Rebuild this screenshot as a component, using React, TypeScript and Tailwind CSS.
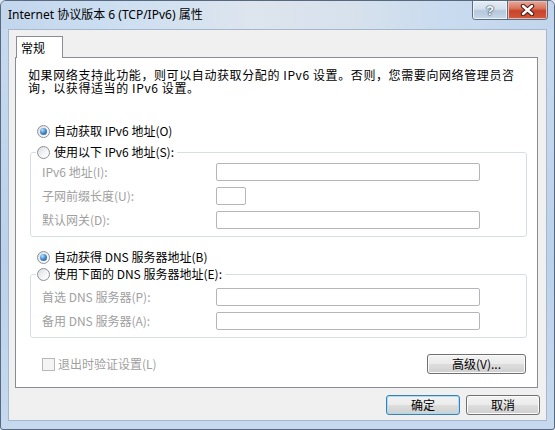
import React from 'react';

interface RadioProps {
  checked?: boolean;
  label: string;
}

// Win7-style radio bullet
const Radio: React.FC<{ checked?: boolean }> = ({ checked }) => (
  <span className="w-[13px] h-[13px] shrink-0 rounded-full border border-[#8b9097] bg-[linear-gradient(135deg,#d9dde2_0%,#f5f6f7_60%,#ffffff_100%)] flex items-center justify-center">
    {checked && (
      <span className="w-[7px] h-[7px] rounded-full bg-[radial-gradient(circle_at_35%_30%,#b9e0fb_0%,#4b8fd0_45%,#1d4f86_100%)]" />
    )}
  </span>
);

const RadioRow: React.FC<RadioProps> = ({ checked, label }) => (
  <span className="h-[16px] flex items-center gap-[4px] whitespace-nowrap text-black">
    <Radio checked={checked} />
    <span>{label}</span>
  </span>
);

interface FieldProps {
  label: string;
  small?: boolean;
}

const Field: React.FC<FieldProps> = ({ label, small }) => (
  <div className="h-[18px] flex items-center pl-[11px]">
    <span className="w-[174px] text-[#a0a0a0] whitespace-nowrap">{label}</span>
    <span
      className={
        small
          ? 'w-[30px] h-[18px] rounded-[2px] border border-[#b3b7bc] bg-white'
          : 'w-[264px] h-[18px] rounded-[2px] border border-[#b3b7bc] bg-white'
      }
    />
  </div>
);

interface ButtonProps {
  label: string;
  width: string;
  isDefault?: boolean;
}

const Button: React.FC<ButtonProps> = ({ label, width, isDefault }) => (
  <div
    className={
      (isDefault
        ? 'border-[#3c7fb1] shadow-[inset_0_0_0_1px_#a9dcf6] '
        : 'border-[#707070] shadow-[inset_0_0_0_1px_#fbfbfb] ') +
      width +
      ' h-[20px] rounded-[3px] border bg-[linear-gradient(180deg,#f3f3f3_0%,#ebebeb_48%,#dddddd_52%,#cfcfcf_100%)] flex items-center justify-center text-black whitespace-nowrap'
    }
  >
    {label}
  </div>
);

export default function App() {
  return (
    <div className="w-[555px] h-[430px] bg-[#dfe8f2]">
      <div className="w-[555px] h-[430px] flex flex-col rounded-t-[6px] rounded-b-[3px] border border-[#56697f] bg-[linear-gradient(180deg,#c8daee_0%,#bcd2ea_60%,#c6d9ee_100%)] overflow-hidden">
        {/* Title bar */}
        <div className="h-[28px] shrink-0 flex items-start justify-between bg-[linear-gradient(90deg,#c2d6ec_0%,#cddff1_22%,#dde5ee_45%,#d8e2ec_62%,#c9dbef_80%,#c1d6ec_100%)]">
          <div className="h-[28px] pl-[7px] flex items-center text-[12px] text-black whitespace-nowrap font-['Noto_Sans','Noto_Sans_CJK_SC',sans-serif]">
            Internet 协议版本 6 (TCP/IPv6) 属性
          </div>
          <div className="mr-[6px] h-[19px] flex rounded-b-[4px] border border-t-0 border-[#5a6d84] overflow-hidden">
            <div className="w-[34px] h-full flex items-center justify-center bg-[linear-gradient(180deg,#e6eef6_0%,#d3dfeb_45%,#b5c7da_55%,#c9d8e8_100%)] shadow-[inset_0_0_0_1px_#eef4fa]">
              <span className="text-[13px] leading-none font-bold text-white font-['Liberation_Sans',sans-serif] [text-shadow:0_0_1px_#3d4f63,0_0_1px_#3d4f63,0_0_2px_#3d4f63]">
                ?
              </span>
            </div>
            <div className="w-[40px] h-full flex items-center justify-center border-l border-[#5a6d84] bg-[linear-gradient(180deg,#e9a99a_0%,#d8775f_40%,#c7432a_55%,#d2593c_100%)] shadow-[inset_0_0_0_1px_#eebcae]">
              <svg width="15" height="12" viewBox="0 0 15 12">
                <path d="M3 2 L12 10 M12 2 L3 10" stroke="#4a1a12" strokeWidth="4.4" strokeLinecap="round" />
                <path d="M3 2 L12 10 M12 2 L3 10" stroke="#ffffff" strokeWidth="2.4" strokeLinecap="round" />
              </svg>
            </div>
          </div>
        </div>

        {/* Client area */}
        <div className="flex-1 mx-[7px] mb-[8px] border border-[#a4b7cc] bg-[#f0f0f0] flex flex-col pt-[6px] text-[12px] leading-[12px] font-['Noto_Sans_CJK_SC',sans-serif]">
          {/* Tab strip */}
          <div className="ml-[7px] relative z-10 -mb-px w-[47px] h-[22px] border border-b-0 border-[#898c95] bg-white flex items-center pl-[4px] text-black">
            常规
          </div>

          {/* Tab panel */}
          <div className="flex-1 ml-[6px] mr-[8px] border border-[#898c95] bg-white flex flex-col pl-[12px] pr-[10px] pt-[10px]">
            <p className="text-black leading-[13px] tracking-[0.6px]">
              如果网络支持此功能，则可以自动获取分配的 IPv6 设置。否则，您需要向网络管理员咨询，以获得适当的 IPv6 设置。
            </p>

            <div className="mt-[29px] pl-[9px]">
              <RadioRow checked label="自动获取 IPv6 地址(O)" />
            </div>

            <fieldset className="mt-[5px] ml-[2px] border border-[#d5dfe5] rounded-[3px] pb-[7px]">
              <legend className="ml-[5px] pl-[1px] pr-[3px]">
                <RadioRow label="使用以下 IPv6 地址(S):" />
              </legend>
              <div className="pt-[3px] flex flex-col gap-[6px]">
                <Field label="IPv6 地址(I):" />
                <Field label="子网前缀长度(U):" small />
                <Field label="默认网关(D):" />
              </div>
            </fieldset>

            <div className="mt-[12px] pl-[9px]">
              <RadioRow checked label="自动获得 DNS 服务器地址(B)" />
            </div>

            <fieldset className="mt-[1px] ml-[2px] border border-[#d5dfe5] rounded-[3px] pb-[7px]">
              <legend className="ml-[5px] pl-[1px] pr-[3px]">
                <RadioRow label="使用下面的 DNS 服务器地址(E):" />
              </legend>
              <div className="pt-[6px] flex flex-col gap-[6px]">
                <Field label="首选 DNS 服务器(P):" />
                <Field label="备用 DNS 服务器(A):" />
              </div>
            </fieldset>

            <div className="mt-[16px] h-[20px] flex items-center justify-between">
              <div className="ml-[14px] flex items-center gap-[3px]">
                <span className="w-[13px] h-[13px] border border-[#b8b8b8] bg-[#f4f4f4]" />
                <span className="text-[#a0a0a0] whitespace-nowrap">退出时验证设置(L)</span>
              </div>
              <div className="mr-[1px]">
                <Button label="高级(V)..." width="w-[99px]" />
              </div>
            </div>
          </div>

          {/* Dialog buttons */}
          <div className="h-[20px] mt-[7px] mb-[5px] flex justify-end gap-[6px] pr-[6px]">
            <Button label="确定" width="w-[74px]" isDefault />
            <Button label="取消" width="w-[74px]" />
          </div>
        </div>
      </div>
    </div>
  );
}
